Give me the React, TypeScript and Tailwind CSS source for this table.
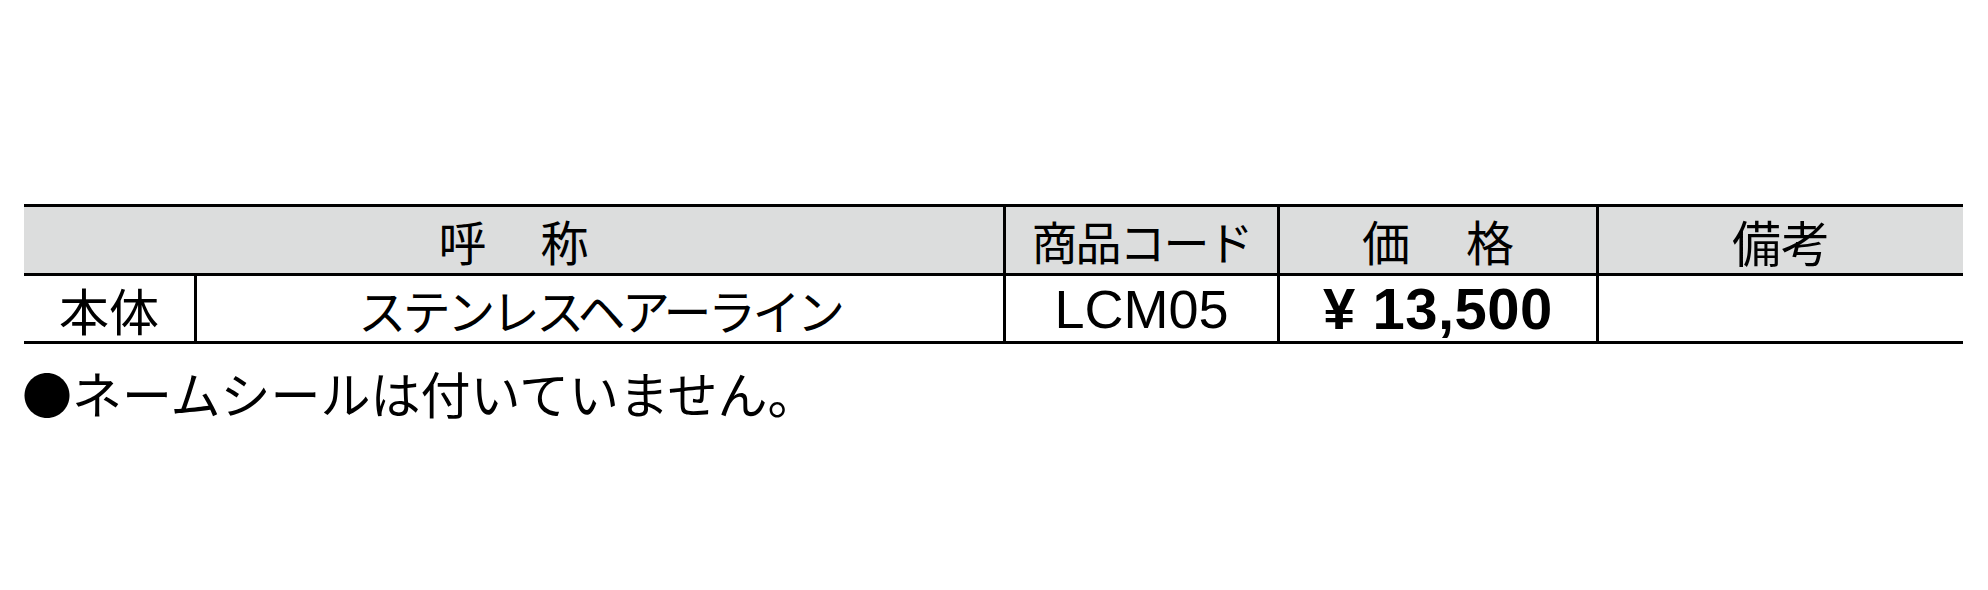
const jp = "font-['Noto_Sans_CJK_JP',sans-serif]";
const latin = "font-['Liberation_Sans',Arial,sans-serif]";

export default function App() {
  return (
    <div className={`h-[590px] w-[1988px] overflow-hidden bg-white pt-[204px] text-black ${jp}`}>
      <div className="ml-[24px] w-[1939px]">
        {/* header row */}
        <div className="grid grid-cols-[979px_274px_319px_367px] border-y-[3px] border-black bg-[#dcdddd]">
          <div className="flex h-[66px] items-center justify-center gap-[54px] text-[48px] leading-none">
            <span>呼</span>
            <span>称</span>
          </div>
          <div className="flex h-[66px] items-center justify-center border-l-[3px] border-black text-[46px] leading-none tracking-[-2px]">
            商品コード
          </div>
          <div className="flex h-[66px] items-center justify-center gap-[56px] border-l-[3px] border-black text-[48px] leading-none">
            <span>価</span>
            <span>格</span>
          </div>
          <div className="flex h-[66px] items-center justify-center border-l-[3px] border-black text-[49px] leading-none">
            備考
          </div>
        </div>

        {/* body row */}
        <div className="grid grid-cols-[170px_809px_274px_319px_367px] border-b-[3px] border-black">
          <div className="flex h-[65px] items-center justify-center text-[50px] leading-none">本体</div>
          <div className="flex h-[65px] items-center justify-center border-l-[3px] border-black text-[48px] leading-none tracking-[-3.5px]">
            ステンレスヘアーライン
          </div>
          <div
            className={`flex h-[65px] items-center justify-center border-l-[3px] border-black text-[54px] leading-none ${latin}`}
          >
            LCM05
          </div>
          <div
            className={`flex h-[65px] items-center justify-center border-l-[3px] border-black text-[58px] font-bold leading-none tracking-[0.5px] ${latin}`}
          >
            ¥ 13,500
          </div>
          <div className="h-[65px] border-l-[3px] border-black" />
        </div>
      </div>

      <p className="ml-[22px] mt-[20px] text-[50px] leading-[56px]">●ネームシールは付いていません。</p>
    </div>
  );
}
